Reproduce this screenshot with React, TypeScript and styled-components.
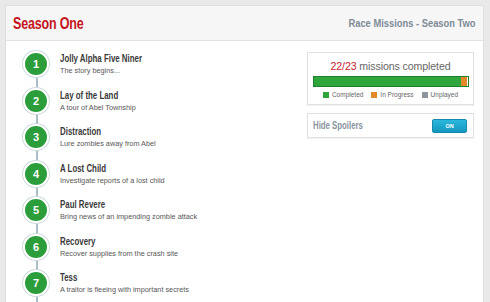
import React from "react";
import styled, { createGlobalStyle } from "styled-components";

interface IMission {
  title: string;
  blurb: string;
}

const missions: IMission[] = [
  { title: "Jolly Alpha Five Niner", blurb: "The story begins..." },
  { title: "Lay of the Land", blurb: "A tour of Abel Township" },
  { title: "Distraction", blurb: "Lure zombies away from Abel" },
  { title: "A Lost Child", blurb: "Investigate reports of a lost child" },
  { title: "Paul Revere", blurb: "Bring news of an impending zombie attack" },
  { title: "Recovery", blurb: "Recover supplies from the crash site" },
  { title: "Tess", blurb: "A traitor is fleeing with important secrets" }
];

const GlobalStyle = createGlobalStyle`
  html, body {
    margin: 0;
    padding: 0;
    background: #e9e9e9;
    overflow: hidden;
  }
  body {
    font-family: "Liberation Sans", Arial, sans-serif;
  }
`;

// condensed headline look (no narrow face installed)
const Condensed = styled.span<{ $scale: number; $origin?: string }>`
  display: inline-block;
  white-space: nowrap;
  transform: scaleX(${p => p.$scale});
  transform-origin: ${p => p.$origin || "left"} center;
`;

const Page = styled.div`
  height: 302px;
  padding: 5px 6px 0 5px;
  box-sizing: border-box;
`;

const Card = styled.div`
  height: 100%;
  background: #fff;
  border: 1px solid #dedede;
  border-bottom: none;
  box-sizing: border-box;
  display: flex;
  flex-direction: column;
  overflow: hidden;
`;

const Header = styled.div`
  height: 35px;
  flex: none;
  background: #f6f6f6;
  border-bottom: 1px solid #e2e2e2;
  display: flex;
  align-items: center;
  justify-content: space-between;
  padding: 0 7px;
  box-sizing: border-box;
`;

const SeasonTitle = styled.h1`
  margin: 0;
  font-size: 16px;
  font-weight: bold;
  color: #c5141b;
  padding-top: 1px;
  letter-spacing: -0.2px;
`;

const SeasonLink = styled.span`
  font-size: 11px;
  font-weight: bold;
  color: #7e8b97;
`;

const Body = styled.div`
  flex: 1;
  display: flex;
  justify-content: space-between;
`;

const Timeline = styled.ul`
  list-style: none;
  margin: 0;
  padding: 5px 0 0 17px;
`;

const Item = styled.li`
  position: relative;
  height: 36.5px;
  display: flex;
  align-items: center;
  gap: 11px;

  &::after {
    content: "";
    position: absolute;
    left: 13px;
    top: 50%;
    height: 36.5px;
    width: 2px;
    background: #a9bec6;
    z-index: 0;
  }
`;

const Badge = styled.div`
  position: relative;
  z-index: 1;
  width: 22px;
  height: 22px;
  border-radius: 50%;
  background: #2b9d3b;
  border: 2px solid #fff;
  box-shadow: 0 0 0 1px #cfdcdf;
  color: #fff;
  font-size: 11px;
  font-weight: bold;
  display: flex;
  align-items: center;
  justify-content: center;
  flex: none;
`;

const Texts = styled.div`
  display: flex;
  flex-direction: column;
  align-items: flex-start;
  gap: 2px;
  margin-top: -1px;
`;

const MissionTitle = styled.span`
  font-size: 10.5px;
  font-weight: bold;
  color: #3a3a3a;
`;

const MissionBlurb = styled.span`
  font-size: 7.3px;
  color: #585858;
`;

const Sidebar = styled.div`
  width: 167px;
  margin: 11px 9px 0 0;
  display: flex;
  flex-direction: column;
  gap: 8px;
`;

const Box = styled.div`
  border: 1px solid #e1e1e1;
  box-shadow: 0 1px 1px rgba(0, 0, 0, 0.05);
  background: #fff;
  box-sizing: border-box;
`;

const StatsBox = styled(Box)`
  height: 53px;
  padding: 6px 5px 0;
  display: flex;
  flex-direction: column;
  align-items: center;
`;

const Count = styled.div`
  font-size: 10.6px;
  color: #666;
  line-height: 14px;
  letter-spacing: -0.1px;
`;

const CountNum = styled.span`
  color: #c5232b;
`;

const Bar = styled.div`
  margin-top: 3px;
  width: 156px;
  height: 11px;
  display: flex;
  border: 1px solid #1f7f2a;
  box-sizing: border-box;
`;

const BarPart = styled.div<{ $color: string }>`
  background: ${p => p.$color};
  height: 100%;
`;

const Legend = styled.div`
  margin-top: 4px;
  display: flex;
  gap: 8px;
  font-size: 6.5px;
  color: #666;
`;

const LegendItem = styled.span`
  display: flex;
  align-items: center;
  gap: 3px;
`;

const Swatch = styled.i<{ $color: string }>`
  width: 6px;
  height: 6px;
  background: ${p => p.$color};
`;

const SpoilerBox = styled(Box)`
  height: 25px;
  padding: 0 6px 0 5px;
  display: flex;
  align-items: center;
  justify-content: space-between;
`;

const SpoilerLabel = styled.span`
  font-size: 10px;
  font-weight: bold;
  color: #8894a0;
`;

const Toggle = styled.button`
  width: 35px;
  height: 14px;
  padding: 0;
  border: 1px solid #1589ab;
  border-radius: 2px;
  background: linear-gradient(#2bb7dc, #1597bf);
  color: #fff;
  font-size: 5.5px;
  font-weight: bold;
  font-family: "Liberation Sans", sans-serif;
`;

const App: React.FC = () => {
  const done = 22;
  const total = 23;
  const pct = (done / total) * 100;

  return (
    <>
      <GlobalStyle />
      <Page>
        <Card>
          <Header>
            <SeasonTitle>
              <Condensed $scale={0.78}>Season One</Condensed>
            </SeasonTitle>
            <SeasonLink>
              <Condensed $scale={0.85} $origin="right">
                Race Missions - Season Two
              </Condensed>
            </SeasonLink>
          </Header>
          <Body>
            <Timeline>
              {missions.map((m, i) => (
                <Item key={m.title}>
                  <Badge>{i + 1}</Badge>
                  <Texts>
                    <MissionTitle>
                      <Condensed $scale={0.75}>{m.title}</Condensed>
                    </MissionTitle>
                    <MissionBlurb>{m.blurb}</MissionBlurb>
                  </Texts>
                </Item>
              ))}
            </Timeline>
            <Sidebar>
              <StatsBox>
                <Count>
                  <CountNum>
                    {done}/{total}
                  </CountNum>{" "}
                  missions completed
                </Count>
                <Bar>
                  <BarPart $color="#2ea63b" style={{ width: `${pct}%` }} />
                  <BarPart $color="#e08a2a" style={{ width: `${100 - pct}%` }} />
                </Bar>
                <Legend>
                  <LegendItem>
                    <Swatch $color="#2ea63b" />
                    Completed
                  </LegendItem>
                  <LegendItem>
                    <Swatch $color="#e08a2a" />
                    In Progress
                  </LegendItem>
                  <LegendItem>
                    <Swatch $color="#8c969c" />
                    Unplayed
                  </LegendItem>
                </Legend>
              </StatsBox>
              <SpoilerBox>
                <SpoilerLabel>
                  <Condensed $scale={0.78}>Hide Spoilers</Condensed>
                </SpoilerLabel>
                <Toggle>ON</Toggle>
              </SpoilerBox>
            </Sidebar>
          </Body>
        </Card>
      </Page>
    </>
  );
};

export default App;
